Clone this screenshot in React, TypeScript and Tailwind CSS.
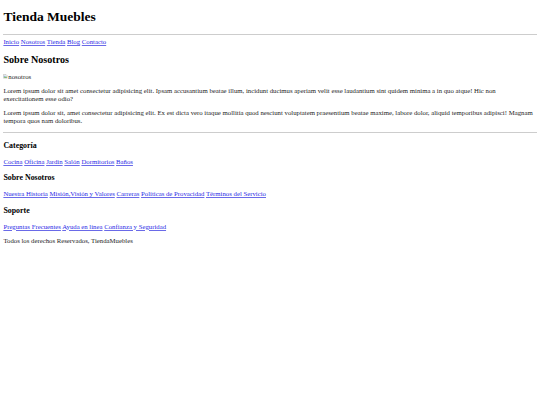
import React from 'react'

// Page rendered at 1280px width, shown at 540px: every size is the browser default * 0.421875

const navLinks = ['Inicio', 'Nosotros', 'Tienda', 'Blog', 'Contacto']

const footerSections = [
  { title: 'Categoría', links: ['Cocina', 'Oficina', 'Jardín', 'Salón', 'Dormitorios', 'Baños'] },
  {
    title: 'Sobre Nosotros',
    links: ['Nuestra Historia', 'Misión,Visión y Valores', 'Carreras', 'Políticas de Provacidad', 'Términos del Servicio'],
  },
  { title: 'Soporte', links: ['Preguntas Frecuentes', 'Ayuda en línea', 'Confianza y Seguridad'] },
]

function Links({ items }: { items: string[] }) {
  return (
    <>
      {items.map((l, i) => (
        <React.Fragment key={l}>
          <a href="#" className="text-[#2a2ae6] underline decoration-[#6a6ae8]">{l}</a>
          {i < items.length - 1 && ' '}
        </React.Fragment>
      ))}
    </>
  )
}

function BrokenImage() {
  return (
    <svg width="4.6" height="4.6" viewBox="0 0 16 16" className="inline-block align-baseline mr-[0.4px]">
      <path d="M1.5 1.5h9l4 4v9h-13z" fill="#f4f4f4" stroke="#9a9a9a" strokeWidth="1.4" />
      <path d="M3 6h6v4H3z" fill="#8fb6e0" />
      <path d="M3 13l4-4 3 2 3-3v5H3z" fill="#5aa544" />
    </svg>
  )
}

function Rule() {
  return <div className="my-[3.375px] border-t border-[#cdcdcd]" />
}

export default function App() {
  return (
    <div className="bg-white min-h-[405px]">
      <div className="m-[3.375px] font-['Liberation_Serif',serif] text-[#1c1c1c] text-[6.75px] leading-[7.76px]">
        <header>
          <h1 className="text-[13.5px] leading-[15.53px] font-bold my-[9.045px] text-black">Tienda Muebles</h1>
          <Rule />
          <nav>
            <Links items={navLinks} />
          </nav>
        </header>

        <main>
          <h2 className="text-[10.125px] leading-[11.64px] font-bold my-[8.404px] text-black">Sobre Nosotros</h2>
          <div className="h-[6.2px] leading-[1.4px]">
            <BrokenImage />nosotros
          </div>
          <p className="my-[6.75px]">
            Lorem ipsum dolor sit amet consectetur adipisicing elit. Ipsam accusantium beatae illum, incidunt ducimus
            aperiam velit esse laudantium sint quidem minima a in quo atque! Hic non exercitationem esse odio?
          </p>
          <p className="my-[6.75px]">
            Lorem ipsum dolor sit, amet consectetur adipisicing elit. Ex est dicta vero itaque mollitia quod nesciunt
            voluptatem praesentium beatae maxime, labore dolor, aliquid temporibus adipisci! Magnam tempora quos nam
            doloribus.
          </p>
        </main>

        <Rule />

        <footer>
          {footerSections.map(s => (
            <div key={s.title}>
              <h3 className="text-[7.9px] leading-[9.08px] font-bold my-[7.9px] text-black">{s.title}</h3>
              <div>
                <Links items={s.links} />
              </div>
            </div>
          ))}
          <p className="my-[6.75px]">Todos los derechos Reservados, TiendaMuebles</p>
        </footer>
      </div>
    </div>
  )
}
